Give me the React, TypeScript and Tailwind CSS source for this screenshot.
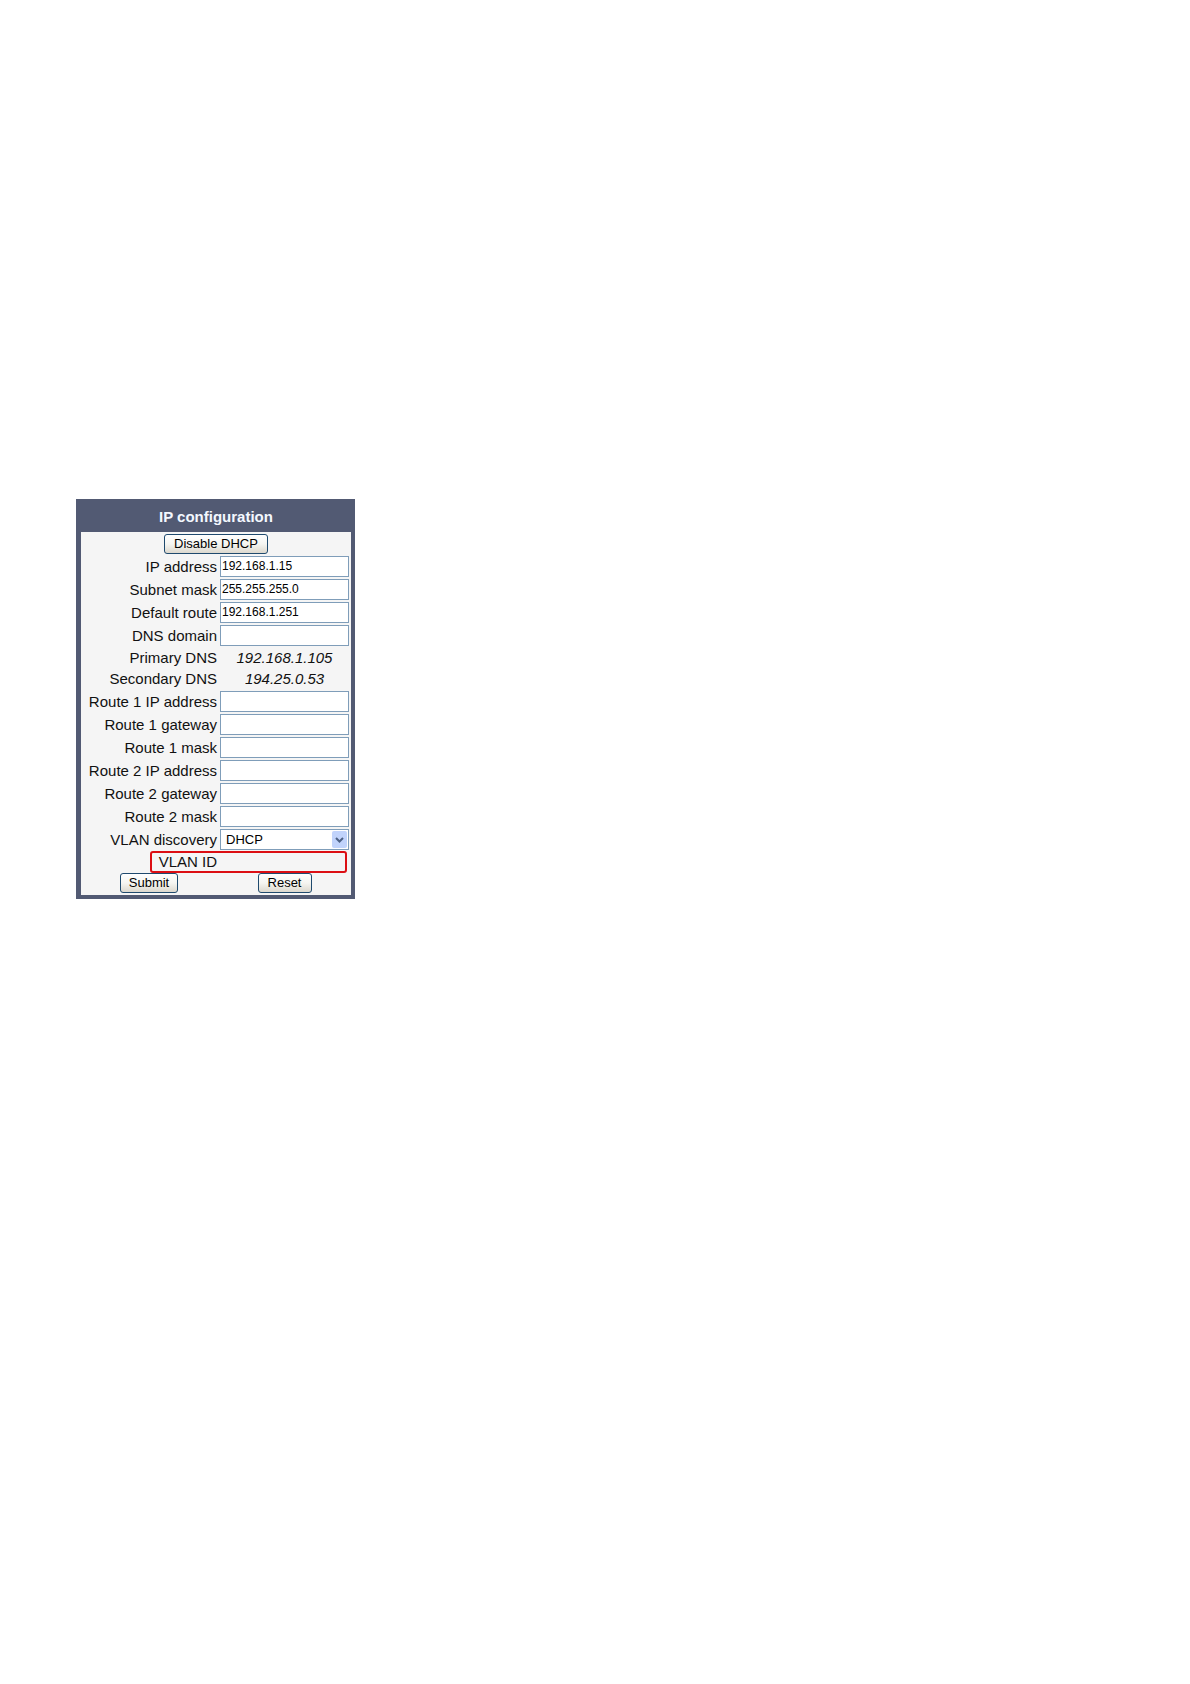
import { useState } from "react";
import type { ReactNode } from "react";

type Field = {
  id: string;
  label: string;
  value?: string;
};

const ADDRESS_FIELDS: Field[] = [
  { id: "ip", label: "IP address", value: "192.168.1.15" },
  { id: "mask", label: "Subnet mask", value: "255.255.255.0" },
  { id: "route", label: "Default route", value: "192.168.1.251" },
  { id: "domain", label: "DNS domain" },
];

const DNS_SERVERS: Field[] = [
  { id: "dns1", label: "Primary DNS", value: "192.168.1.105" },
  { id: "dns2", label: "Secondary DNS", value: "194.25.0.53" },
];

const ROUTE_FIELDS: Field[] = [
  { id: "r1ip", label: "Route 1 IP address" },
  { id: "r1gw", label: "Route 1 gateway" },
  { id: "r1mask", label: "Route 1 mask" },
  { id: "r2ip", label: "Route 2 IP address" },
  { id: "r2gw", label: "Route 2 gateway" },
  { id: "r2mask", label: "Route 2 mask" },
];

const ROW = "grid grid-cols-[136fr_129fr] gap-[3px] pr-0.5 items-center";
const LABEL = "text-right whitespace-nowrap text-[15px] leading-5";

const TextRow = ({ id, label, value = "" }: Field) => (
  <div className={`${ROW} h-[23px]`}>
    <label htmlFor={id} className={LABEL}>
      {label}
    </label>
    <input
      id={id}
      type="text"
      defaultValue={value}
      className="h-[21px] w-full min-w-0 border border-[#7f9db9] bg-white px-px pb-px text-xs text-black outline-none"
    />
  </div>
);

const FormButton = ({
  type = "button",
  className = "",
  onClick,
  children,
}: {
  type?: "button" | "submit" | "reset";
  className?: string;
  onClick?: () => void;
  children: ReactNode;
}) => (
  <button
    type={type}
    onClick={onClick}
    className={`h-5 rounded-[3px] border border-[#1f4a6e] bg-linear-to-b from-white via-[#f5f5f1] to-[#dcd8ce] text-[13px] leading-4 whitespace-nowrap text-black ${className}`}
  >
    {children}
  </button>
);

const App = () => {
  const [dhcp, setDhcp] = useState(true);
  const [vlan, setVlan] = useState("DHCP");

  return (
    <main className="bg-white pt-[499px] pl-[76px] font-['Liberation_Sans',Arial,sans-serif] text-[#111]">
      <form
        onSubmit={(e) => e.preventDefault()}
        className="w-full max-w-[279px] border-4 border-t-0 border-l-5 border-[#525a73] bg-[#f5f5f5]"
      >
        <h1 className="flex h-[33px] items-center justify-center bg-[#525a73] pt-1 text-[15px] font-bold text-[#f4f8ff]">
          IP configuration
        </h1>

        <div className="flex h-[23px] items-center justify-center">
          <FormButton className="w-[104px]" onClick={() => setDhcp(!dhcp)}>
            {dhcp ? "Disable DHCP" : "Enable DHCP"}
          </FormButton>
        </div>

        {ADDRESS_FIELDS.map((f) => (
          <TextRow key={f.id} {...f} />
        ))}

        {/* Assigned by DHCP, read only */}
        <div className="pb-px">
          {DNS_SERVERS.map((f) => (
            <div key={f.id} className={`${ROW} h-[21px]`}>
              <span className={LABEL}>{f.label}</span>
              <span className="text-center text-[15px] leading-5 italic">
                {f.value}
              </span>
            </div>
          ))}
        </div>

        {ROUTE_FIELDS.map((f) => (
          <TextRow key={f.id} {...f} />
        ))}

        <div className={`${ROW} h-[23px]`}>
          <label htmlFor="vlan" className={LABEL}>
            VLAN discovery
          </label>
          <div className="relative">
            <select
              id="vlan"
              value={vlan}
              onChange={(e) => setVlan(e.target.value)}
              className="block h-[21px] w-full appearance-none border border-[#7f9db9] bg-white pl-[5px] text-[13px] leading-4 text-black outline-none"
            >
              <option>DHCP</option>
              <option>LLDP-MED</option>
              <option>Manual</option>
            </select>
            <span className="pointer-events-none absolute inset-y-0.5 right-0.5 flex w-[15px] items-center justify-center rounded-xs bg-[#c1d3fb]">
              <svg width="9" height="6" viewBox="0 0 9 6" fill="none">
                <path d="M1 1l3.5 3.5L8 1" stroke="#4d6185" strokeWidth="2" />
              </svg>
            </span>
          </div>
        </div>

        {/* VLAN ID, marked with a red frame */}
        <div className={`${ROW} relative h-[22px]`}>
          <span className={LABEL}>VLAN ID</span>
          <span className="absolute inset-y-0 right-1 left-[69px] rounded-[3px] border-2 border-[#dc0f14]" />
        </div>

        <div className="grid h-[22px] grid-cols-[136fr_129fr] items-start justify-items-center gap-[3px] pr-0.5">
          <FormButton type="submit" className="w-[58px]">
            Submit
          </FormButton>
          <FormButton type="reset" className="w-[54px]">
            Reset
          </FormButton>
        </div>
      </form>
    </main>
  );
};

export default App;
